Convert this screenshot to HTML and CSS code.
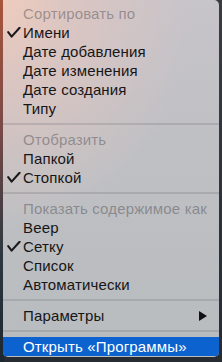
FILE: index.html
```html
<!DOCTYPE html>
<html lang="ru">
<head>
<meta charset="utf-8">
<title>Menu</title>
<link rel="stylesheet" href="styles.css">
</head>
<body>
<div class="desk">
  <div class="menu">
    <div class="row head">Сортировать по</div>
    <div class="row"><span class="mark"><svg width="14" height="11" viewBox="0 0 14 11"><path d="M1.2 5.2 L4.6 9.6 L12.6 0.8" fill="none" stroke="#1a1a1a" stroke-width="2.1" stroke-linecap="round" stroke-linejoin="round"/></svg></span>Имени</div>
    <div class="row">Дате добавления</div>
    <div class="row">Дате изменения</div>
    <div class="row">Дате создания</div>
    <div class="row">Типу</div>
    <div class="sep"></div>
    <div class="row head">Отобразить</div>
    <div class="row">Папкой</div>
    <div class="row"><span class="mark"><svg width="14" height="11" viewBox="0 0 14 11"><path d="M1.2 5.2 L4.6 9.6 L12.6 0.8" fill="none" stroke="#1a1a1a" stroke-width="2.1" stroke-linecap="round" stroke-linejoin="round"/></svg></span>Стопкой</div>
    <div class="sep"></div>
    <div class="row head">Показать содержимое как</div>
    <div class="row">Веер</div>
    <div class="row"><span class="mark"><svg width="14" height="11" viewBox="0 0 14 11"><path d="M1.2 5.2 L4.6 9.6 L12.6 0.8" fill="none" stroke="#1a1a1a" stroke-width="2.1" stroke-linecap="round" stroke-linejoin="round"/></svg></span>Сетку</div>
    <div class="row">Список</div>
    <div class="row">Автоматически</div>
    <div class="sep"></div>
    <div class="row sub">Параметры<svg class="arrow" width="8" height="10" viewBox="0 0 8 10"><path d="M0 0 L8 5 L0 10 Z" fill="#111"/></svg></div>
    <div class="sep"></div>
    <div class="row active">Открыть «Программы»</div>
  </div>
</div>
</body>
</html>
```
FILE: styles.css
```css
html, body {
  margin: 0;
  padding: 0;
}
body {
  width: 222px;
  height: 362px;
  overflow: hidden;
  font-family: "Liberation Sans", Arial, sans-serif;
}
.desk {
  width: 222px;
  height: 362px;
  background:
    linear-gradient(180deg, #a8553a 0%, #7a4a48 35%, #2c3840 70%, #1c2830 100%) left / 4px 100% no-repeat,
    linear-gradient(180deg, #3a3c42 0%, #262c32 100%);
  padding: 0 3px 0 3px;
  box-sizing: border-box;
}
.menu {
  width: 216px;
  height: 357px;
  box-sizing: border-box;
  padding-top: 4px;
  border-radius: 0 5px 5px 5px;
  overflow: hidden;
  background:
    radial-gradient(ellipse 190px 230px at 0 0, rgba(238, 204, 190, 1) 0%, rgba(224, 198, 192, 0.8) 35%, rgba(200, 194, 198, 0) 100%),
    linear-gradient(180deg, #c7c4ca 0%, #bfc0c4 40%, #b8bcbf 100%);
}
.row {
  height: 19px;
  line-height: 19px;
  font-size: 15px;
  letter-spacing: 0.15px;
  color: #161616;
  padding-left: 20px;
  display: flex;
  align-items: center;
  position: relative;
  white-space: nowrap;
}
.head {
  color: rgba(70, 70, 78, 0.45);
}
.mark {
  position: absolute;
  left: 4px;
  top: 4px;
  width: 14px;
  height: 11px;
  display: block;
}
.mark svg {
  display: block;
}
.sub {
  justify-content: space-between;
  padding-right: 12px;
}
.arrow {
  display: block;
}
.sep {
  height: 12px;
  position: relative;
}
.sep::after {
  content: "";
  position: absolute;
  left: 0;
  right: 0;
  top: 5px;
  height: 2px;
  background: rgba(80, 80, 90, 0.18);
}
.active {
  background: #0c63cf;
  color: #ffffff;
}
```
